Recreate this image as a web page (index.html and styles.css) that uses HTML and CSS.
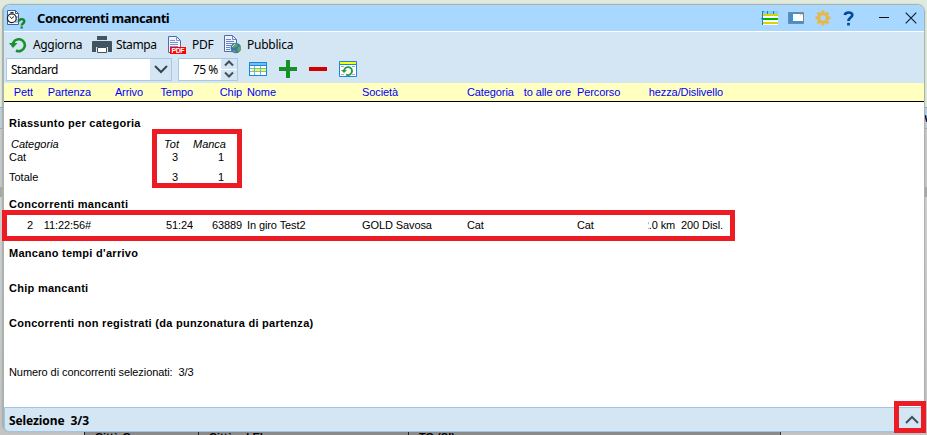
FILE: index.html
```html
<!DOCTYPE html>
<html lang="it">
<head>
<meta charset="utf-8">
<title>Concorrenti mancanti</title>
<link rel="stylesheet" href="styles.css">
</head>
<body>
<div class="backdrop">
  <i class="strip left"></i><i class="strip right">v</i>
  <div class="under"><span class="u1">Città Gara</span><span class="u2">Città ed Elenco</span><span class="u3">TO (SI)</span></div>
</div>
<main class="window">
  <header class="titlebar">
    <svg class="appicon" width="20" height="20" viewBox="0 0 20 20"><path d="M1.500 1.500h8l3 3v11h-11z" fill="#f4f8ff" stroke="#465c91"/><path d="M9.500 1.500v3h3" fill="none" stroke="#465c91"/><path d="M9 8h3M9 11h3M9 13h3" stroke="#7794d2"/><circle cx="5.800" cy="9.300" r="4.400" fill="#fff" stroke="#222" stroke-width="1.200"/><path d="M5.500 9.500l2.500-2M5.500 9.500L4 7.500M4.500 3.500h3" stroke="#222" fill="none"/><path d="M13 12.500c0-3.200 5.300-3 5.300 0 0 2-2.600 2-2.600 4M15.700 17.500v2" fill="none" stroke="#138522" stroke-width="2.400"/></svg>
    <h1>Concorrenti mancanti</h1>
    <nav>
      <svg class="n1" width="17" height="15" viewBox="0 0 17 15"><path d="M1 0h16v14H1z" fill="#8ccaf5"/><path d="M2 3h15v11H2z" fill="#fff"/><path d="M0 7.500h2M1.500 0v14M1 .5h2M6.500 0v3M12.500 0v3" stroke="#1680cf"/><path d="M2 4h15M2 12h15" stroke="#d5d700" stroke-width="2"/><path d="M2 8h15" stroke="#00b500" stroke-width="2"/></svg>
      <svg class="n2" width="16" height="12" viewBox="0 0 16 12"><path d="M.5.500h15v11H.5z" fill="#3692dd" stroke="#858585"/><path d="M5 2h10v7H5z" fill="#fff"/><path d="M12 2h1M14 2h1" stroke="#888"/></svg>
      <svg class="n3" width="16" height="16" viewBox="0 0 16 16"><circle cx="8" cy="8" r="4.200" fill="none" stroke="#e6b84c" stroke-width="3"/><path d="M8 .5v3M8 12.500v3M.5 8h3M12.500 8h3M2.600 2.600l2.200 2.200M11.200 11.200l2.200 2.200M2.600 13.400l2.200-2.200M11.200 4.800l2.200-2.200" stroke="#e6b84c" stroke-width="3"/></svg>
      <svg class="n4" width="12" height="15" viewBox="0 0 12 15"><path d="M1.800 4C2.300 1 9.300.4 9.300 4 9.300 6.500 5.500 6.700 5.500 10M5.500 11.800V14.500" fill="none" stroke="#004b9b" stroke-width="2.700"/></svg>
      <svg class="n5" width="10" height="2"><path d="M0 .5h10" stroke="#111"/></svg>
      <svg class="n6" width="12" height="12" viewBox="0 0 12 12"><path d="M.7.700l10.600 10.600M11.300.7L.7 11.300" stroke="#123" stroke-width="1.200"/></svg>
    </nav>
  </header>
  <section class="toolbar">
    <div class="actions">
      <svg class="refresh" width="18" height="16" viewBox="0 0 18 16"><path d="M3.800 8a6 6 0 1 1 3.200 5.500" fill="none" stroke="#16942c" stroke-width="2.600"/><path d="M0 6h8.500L4 11z" fill="#16942c"/></svg><span class="a1">Aggiorna</span>
      <svg class="print" width="20" height="18" viewBox="0 0 20 18"><path d="M5 0h10v5H5z" fill="#40535f"/><path d="M1 5h18q1 0 1 1v10h-4v-5H4v5H0V6q0-1 1-1" fill="#40535f"/><path d="M5.500 11.500h9v5h-9z" fill="#fff" stroke="#40535f"/><path d="M5 4.500h10" stroke="#d4e6f4"/></svg><span class="a2">Stampa</span>
      <svg class="pdf" width="18" height="18" viewBox="0 0 18 18"><path d="M.5.500h8l4 4v12H.5z" fill="#eef3ff" stroke="#526ba2"/><path d="M8.500.500v4h4M2 4.500h5M2 6.500h8M2 8.500h8M2 10.500h8" fill="none" stroke="#7894d6"/><path d="M2 11h16v7H2z" fill="#f00"/><text x="3.500" y="17" textLength="13">PDF</text></svg><span class="a3">PDF</span>
      <svg class="publish" width="18" height="19" viewBox="0 0 18 19"><path d="M.5.500h8l4 4v12H.5z" fill="#eef3ff" stroke="#526ba2"/><path d="M8.500.500v4h4M2 4.500h5M2 6.500h8M2 8.500h8M2 10.500h5M2 12.500h4M2 14.500h4" fill="none" stroke="#6683cb"/><circle cx="11.800" cy="13" r="5.300" fill="#3d73b5"/><path d="M8 10l4-2 2 2-2 2-3 1zM14 12l3-1v4l-2 2-2-2zM9 15l3 1-1 2-2-1" fill="#62a653"/><path d="M8 12l3-3" stroke="#a8d6ff"/></svg><span class="a4">Pubblica</span>
    </div>
    <div class="controls">
      <div class="select"><span>Standard</span><b><svg width="14" height="9" viewBox="0 0 14 9"><path d="M1 1l6 6 6-6" fill="none" stroke="#344652" stroke-width="2"/></svg></b></div>
      <div class="zoom"><span>75 %</span><b><svg width="10" height="20" viewBox="0 0 10 20"><path d="M1 6.500l4-4 4 4M1 13.500l4 4 4-4" fill="none" stroke="#40515c" stroke-width="2"/></svg><i></i></b></div>
      <svg class="c1" width="18" height="14" viewBox="0 0 18 14"><path d="M0 0h18v14H0z" fill="#1689dc"/><path d="M1 1h16v2H1z" fill="#72c0f5"/><path d="M1 4h16v9H1z" fill="#fff"/><path d="M3 8h14" stroke="#ff0" stroke-width="2"/><path d="M1 6.500h16M1 9.500h16M5.500 4v9M11.500 4v9" stroke="#4da9e6" stroke-width=".8"/></svg>
      <svg class="c2" width="18" height="18"><path d="M9 0v18M0 9h18" stroke="#169126" stroke-width="4"/></svg>
      <svg class="c3" width="18" height="4"><path d="M0 2h18" stroke="#d40000" stroke-width="4"/></svg>
      <svg class="c4" width="18" height="16" viewBox="0 0 18 16"><path d="M.5.500h17v15H.5z" fill="#fff" stroke="#1689dc"/><path d="M1 2h16" stroke="#ff0" stroke-width="2"/><path d="M1 3.500h16" stroke="#1689dc"/><path d="M5 10a4 4 0 1 1 2 3.500" fill="none" stroke="#2a9b3f" stroke-width="1.800"/><path d="M2 9h6l-3 3z" fill="#2a9b3f"/><path d="M2 5.500h3M13 5.500h3M2 13.500h3M13 13.500h3" stroke="#aaa"/></svg>
    </div>
  </section>
  <div class="row head"><span>Pett</span><span>Partenza</span><span>Arrivo</span><span>Tempo</span><span>Chip</span><span>Nome</span><span>Società</span><span>Categoria</span><span>to alle ore</span><span>Percorso</span><span>hezza/Dislivello</span></div>
  <section class="report">
    <h2 class="h1">Riassunto per categoria</h2>
    <div class="summary">
      <em class="s0">Categoria</em><em>Tot</em><em>Manca</em>
      <span>Cat</span><span>3</span><span>1</span>
      <span class="total">Totale</span><span class="total">3</span><span class="total">1</span>
      <i class="mark"></i>
    </div>
    <h2 class="h2">Concorrenti mancanti</h2>
    <div class="row data"><span>2</span><span>11:22:56#</span><span></span><span>51:24</span><span>63889</span><span>In giro Test2</span><span>GOLD Savosa</span><span>Cat</span><span></span><span>Cat</span><span>2.0 km&nbsp; 200 Disl.</span><i class="mark"></i></div>
    <h2 class="h3">Mancano tempi d'arrivo</h2>
    <h2 class="h4">Chip mancanti</h2>
    <h2 class="h5">Concorrenti non registrati (da punzonatura di partenza)</h2>
    <p>Numero di concorrenti selezionati:&nbsp; 3/3</p>
  </section>
  <footer><strong>Selezione&nbsp; 3/3</strong><svg width="14" height="9" viewBox="0 0 14 9"><path d="M1 8l6-6 6 6" fill="none" stroke="#40515c" stroke-width="2"/></svg><i class="mark"></i></footer>
</main>
</body>
</html>
```

FILE: styles.css
```css
* { box-sizing: border-box; }
body { margin: 0; width: 927px; height: 435px; padding: 4px 2px 3px; overflow: hidden; position: relative; background: #c9c9c9; font-family: "Noto Sans", sans-serif; }
h1, h2, p { margin: 0; }
svg { display: block; flex: none; }
i { font-style: normal; }

.backdrop { position: absolute; inset: 0; background: linear-gradient(#e0ebdd 0, #e0ebdd 107px, #cbcbcb 107px, #c9c9c9 187px, #aaa 187px, #aaa 197px, #d2d2d2 197px, #c4c4c4); }
.strip { position: absolute; top: 107px; width: 3px; height: 22px; background: #bfd0df; border: solid #9aabb9; border-width: 1px 0; overflow: hidden; }
.left { left: 0; }
.right { right: 0; font: bold 12px/20px "Liberation Sans", sans-serif; }
.under { position: absolute; left: 84px; bottom: 0; width: 697px; height: 4px; display: grid; grid-template-columns: 114px 210px 1fr; background: #8c8c8c; border-right: 1px solid #333; overflow: hidden; }
.under span { border-left: 1px solid #222; padding-left: 10px; font: bold 11px/11px "Liberation Sans", sans-serif; padding-top: 1px; }

.window { position: relative; width: 923px; height: 428px; display: flex; flex-direction: column; background: #fff; border: 1px solid #aab2ae; border-width: 1px 1px 1px 2px; border-radius: 8px; box-shadow: 0 0 2px #8885; }
.titlebar { height: 26px; flex: none; display: flex; align-items: center; padding-left: 2px; background: #a8d7ff; border-radius: 6px 6px 0 0; }
.appicon { margin-top: 1px; }
h1 { font-size: 13px; line-height: 26px; margin-left: 11px; white-space: nowrap; letter-spacing: -.47px; }
nav { margin-left: auto; display: flex; align-items: center; height: 26px; padding-right: 7px; }
.n2 { margin-left: 10px; }
.n3 { margin-left: 11px; }
.n4 { margin-left: 12px; }
.n5 { margin-left: 24px; }
.n6 { margin-left: 16px; }

.toolbar { height: 52px; flex: none; background: #d4e6f4; border-top: 1px solid #fff; font-size: 12px; }
.actions { height: 25px; display: flex; align-items: center; padding-left: 5px; }
.actions span, .select span, .zoom span { white-space: nowrap; }
.a1 { width: 59px; margin-left: 6px; letter-spacing: -.35px; }
.a2 { width: 52px; margin-left: 4px; letter-spacing: -.4px; }
.a3 { width: 32px; margin-left: 6px; letter-spacing: -.3px; }
.a4 { margin-left: 5px; letter-spacing: -.25px; }
.pdf text { font: bold 7px "Liberation Sans", sans-serif; fill: #fff; }
.controls { height: 24px; display: flex; align-items: center; padding-left: 2px; }
.select, .zoom { height: 23px; display: flex; align-items: center; background: #fff; border: 1px solid #a7c9e5; }
.select { width: 166px; padding-left: 4px; }
.select span { letter-spacing: -.55px; }
.select b { margin-left: auto; width: 21px; height: 21px; display: grid; place-items: center; background: #d4e6f4; }
.zoom { width: 60px; margin-left: 6px; padding-left: 14px; }
.zoom span { letter-spacing: -.5px; }
.zoom b { position: relative; margin-left: auto; width: 16px; height: 21px; display: grid; place-items: center; background: #d4e6f4; }
.zoom i { position: absolute; left: 0; top: 10px; width: 16px; height: 1px; background: #fff; }
.c1 { margin-left: 11px; }
.c2 { margin-left: 12px; }
.c3 { margin-left: 12px; }
.c4 { margin-left: 12px; }

.row { display: grid; grid-template-columns: 29px 58px 52px 50px 49px 120px 105px 56px 48px 77px 75px; font: 11px/17px "Liberation Sans", sans-serif; white-space: pre; }
.row span { overflow: hidden; }
.row span:nth-child(-n+5) { text-align: right; }
.row span:nth-child(6) { padding-left: 5px; }
.row span:nth-child(10) { padding-left: 6px; }
.row span:nth-child(9), .row span:nth-child(11) { display: flex; justify-content: flex-end; }
.head { height: 19px; flex: none; color: #00f; background: #ffffbf; border-bottom: 1px solid #000; letter-spacing: -.1px; }
.head span { line-height: 18px; }
.data { position: relative; height: 17px; margin-top: 6px; letter-spacing: -.1px; }
.report { height: 305px; flex: none; font: 11px/13px "Liberation Sans", sans-serif; }
h2 { height: 14px; padding-left: 5px; font-size: 11px; line-height: 14px; white-space: nowrap; letter-spacing: .28px; }
.h1 { margin-top: 14px; }
.h2 { margin-top: 13px; }
.h3 { margin-top: 12px; }
.h4, .h5 { margin-top: 21px; }
.summary { position: relative; display: grid; grid-template-columns: 142px 32px 49px; grid-template-rows: 13px 13px 20px; padding-left: 5px; margin-top: 8px; }
.summary > :nth-child(3n+2), .summary > :nth-child(3n) { text-align: right; }
.summary span:nth-child(3n+2) { padding-right: 5px; }
.summary span:nth-child(3n) { padding-right: 8px; }
.summary .s0 { padding-left: 2px; }
.summary .total { padding-top: 7px; }
.summary em:nth-child(2) { padding-right: 4px; }
.summary em:nth-child(3) { padding-right: 6px; }
.report p { margin-top: 36px; padding-left: 5px; letter-spacing: -.08px; }

.mark { position: absolute; border: 5px solid #ed1c24; pointer-events: none; }
.summary .mark { left: 148px; top: -9px; width: 90px; height: 59px; }
.data .mark { left: -2px; top: -7px; width: 733px; height: 31px; z-index: 2; }
footer { position: relative; flex: none; display: flex; align-items: center; justify-content: space-between; height: 25px; margin-top: 0; padding: 0 5px 0 4px; background: #d4e6f4; border: 1px solid #a0c5e2; font-size: 12px; border-radius: 0 0 5px 5px; }
footer strong { padding-top: 1px; letter-spacing: -.1px; }
footer svg { margin-right: -1px; }
footer .mark { right: -3px; top: -7px; width: 32px; height: 32px; }
```
